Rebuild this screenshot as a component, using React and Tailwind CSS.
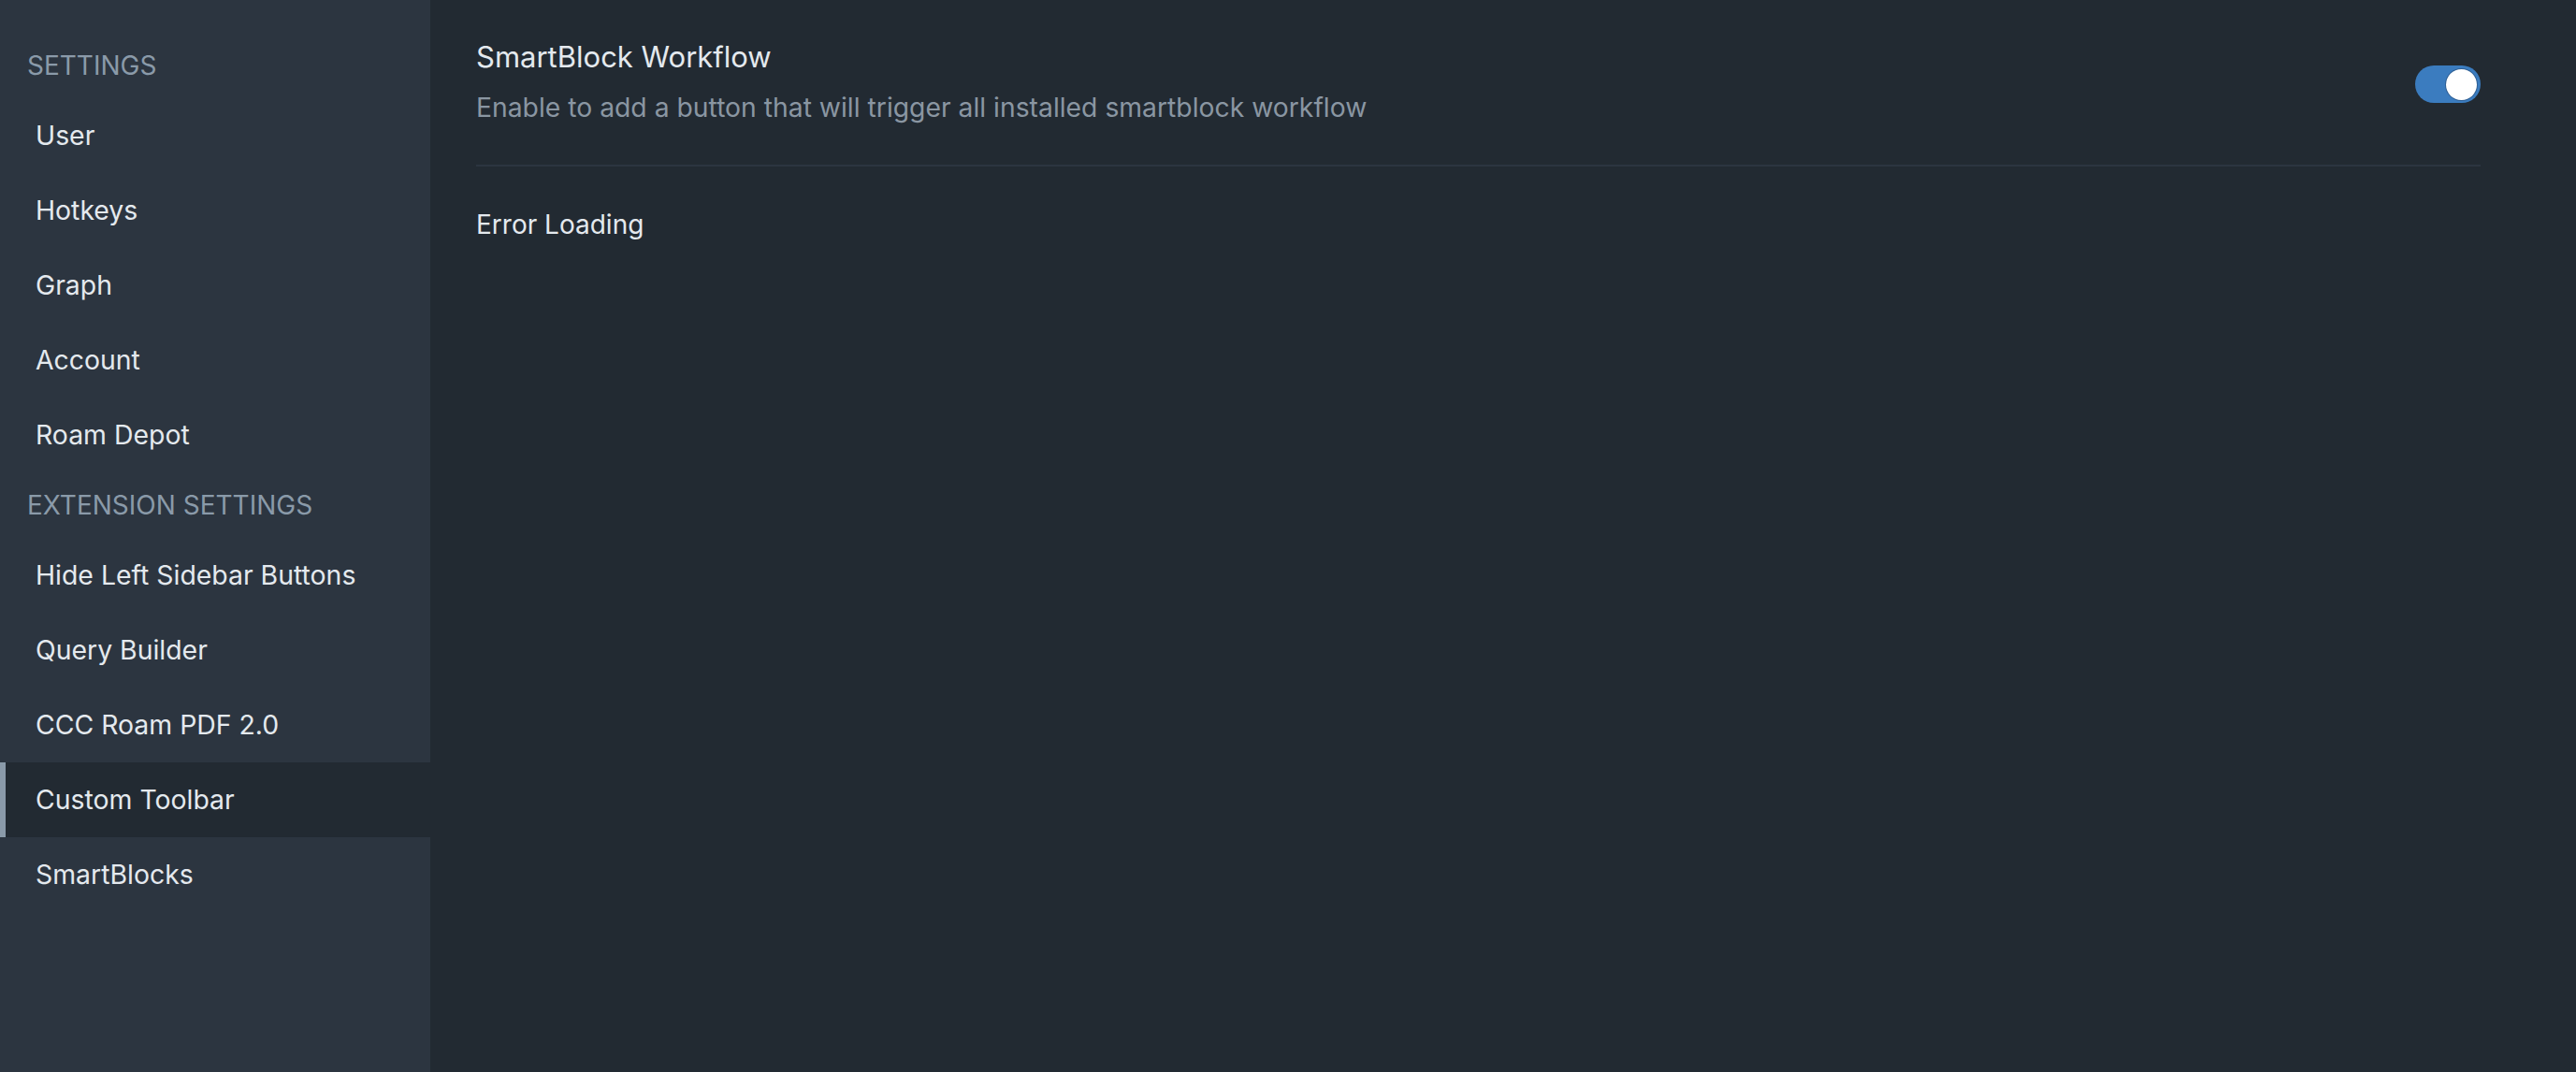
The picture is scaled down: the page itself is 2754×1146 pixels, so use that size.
export default function App() {
  const groups = [
    {
      title: "Settings",
      items: ["User", "Hotkeys", "Graph", "Account", "Roam Depot"],
    },
    {
      title: "Extension Settings",
      items: [
        "Hide Left Sidebar Buttons",
        "Query Builder",
        "CCC Roam PDF 2.0",
        "Custom Toolbar",
        "SmartBlocks",
      ],
    },
  ];
  const active = "Custom Toolbar";

  return (
    <div
      className="flex h-[1146px] w-full bg-[#222a32] text-[#e4e9ee]"
      style={{ fontFamily: "Inter, 'Noto Sans', sans-serif" }}
    >
      {/* sidebar */}
      <aside className="w-[460px] shrink-0 bg-[#2c3540] pt-[35px]">
        {groups.map((g) => (
          <div key={g.title}>
            <div className="flex h-[70px] items-center pl-[29px] text-[28px] uppercase text-[#8a9aa9]">
              {g.title}
            </div>
            {g.items.map((item) => (
              <div
                key={item}
                className={
                  item === active
                    ? "flex h-[80px] items-center border-l-[6px] border-[#8a9aa9] bg-[#222a32] pl-[32px] text-[28.4px]"
                    : "flex h-[80px] items-center pl-[38px] text-[28.4px]"
                }
              >
                {item}
              </div>
            ))}
          </div>
        ))}
      </aside>

      {/* main */}
      <main className="flex-1 pl-[49px] pr-[102px] pt-[41px]">
        <div className="flex justify-between border-b-2 border-[#2c3540] pb-[41px]">
          <div>
            <div className="text-[31px] leading-[40px]">SmartBlock Workflow</div>
            <div className="mt-[14px] text-[28.3px] leading-[40px] text-[#8a96a2]">
              Enable to add a button that will trigger all installed smartblock workflow
            </div>
          </div>
          <div className="mt-[29px] flex h-[40px] w-[70px] items-center justify-end rounded-full bg-[#3b7cbf] pr-[4px]">
            <div className="h-[33px] w-[33px] rounded-full bg-white shadow-[0_0_0_1px_#2f5f94]" />
          </div>
        </div>
        <div className="mt-[42px] text-[28px] leading-[40px]">Error Loading</div>
      </main>
    </div>
  );
}
